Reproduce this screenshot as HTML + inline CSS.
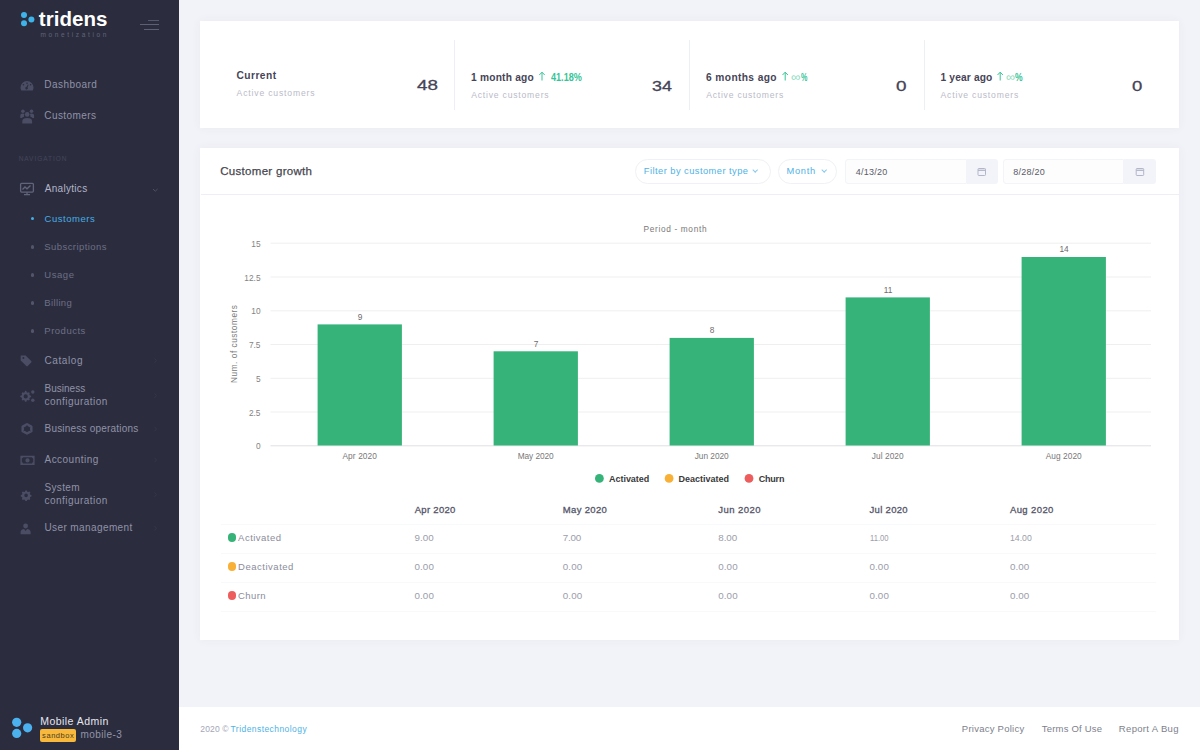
<!DOCTYPE html>
<html><head><meta charset="utf-8">
<style>
*{box-sizing:border-box;margin:0;padding:0}
html,body{width:1200px;height:750px;overflow:hidden}
body{font-family:"Liberation Sans",sans-serif;background:#f2f3f8;position:relative}
.t{position:absolute;white-space:nowrap;line-height:1}
.a{position:absolute}
#side{position:absolute;left:0;top:0;width:179px;height:750px;background:#2b2d3e}
.card{position:absolute;background:#fff;box-shadow:0 0 9px rgba(82,63,105,.05)}
.dot{position:absolute;left:30.8px;width:3.2px;height:3.2px;border-radius:50%;background:#53556b}
.vl{position:absolute;width:1px;background:#eeeff4;top:40px;height:70px}
.hl{position:absolute;height:1px;background:#f8f9fb;left:221px;width:935px}
.pill{position:absolute;border:1px solid #f0f1f6;border-radius:13px;top:159px;height:24.5px}
.chev{position:absolute;width:4.4px;height:4.4px;border-right:1px solid #86c9ef;border-bottom:1px solid #86c9ef;transform:rotate(45deg)}
.inp{position:absolute;background:#fdfdfe;border:1px solid #f3f4f8;top:159px;height:25px;border-radius:3px 0 0 3px}
.add{position:absolute;background:#f3f4f9;top:159px;height:25px;border-radius:0 3px 3px 0}
.rd{position:absolute;left:227.7px;width:8.6px;height:8.6px;border-radius:50%}
.ar{position:absolute;width:5px;height:5px}
</style></head><body>
<div id="side"></div>
<!-- logo -->
<svg class="a" style="left:18px;top:9px" width="20" height="20" viewBox="18 9 20 20">
  <circle cx="24" cy="15" r="3" fill="#3db3ea"/><circle cx="24" cy="23.3" r="3" fill="#3db3ea"/><circle cx="31.4" cy="19.4" r="3" fill="#3db3ea"/>
</svg>
<div class="a" style="left:148px;top:19.5px;width:10.5px;height:1px;background:#54566b"></div>
<div class="a" style="left:140px;top:24px;width:18.5px;height:1px;background:#5d5f74"></div>
<div class="a" style="left:144px;top:28.5px;width:14.5px;height:1px;background:#5d5f74"></div>
<!-- sub dots -->
<div class="dot" style="top:217.2px;background:#45aee6"></div><div class="dot" style="top:245.4px"></div><div class="dot" style="top:273.4px"></div><div class="dot" style="top:301.4px"></div><div class="dot" style="top:329.4px"></div>
<!-- menu icons -->
<svg class="a" style="left:0;top:0" width="179" height="750" viewBox="0 0 179 750" fill="#4b4d64">
  <!-- dashboard gauge -->
  <path d="M27 81a6.5 6.5 0 0 0-6.5 6.5c0 1.1.3 2.1.8 3h11.4c.5-.9.8-1.900.8-3A6.500 6.500 0 0 0 27 81zm0 1.400a.8.8 0 1 1 0 1.600.8.8 0 0 1 0-1.600zm-3.600 1.500a.8.8 0 1 1 0 1.600.8.8 0 0 1 0-1.600zm7.200 0a.8.8 0 1 1 0 1.600.8.8 0 0 1 0-1.600zm-2 .9-1 2.600a1.300 1.300 0 1 1-1.200-.5l1.500-2.300z"/>
  <!-- customers -->
  <g>
    <circle cx="22.900" cy="111.300" r="1.800"/><circle cx="31.500" cy="111.300" r="1.800"/><circle cx="27.200" cy="114.400" r="2.300"/>
    <path d="M20.300 118v-2.400c0-1.300 1-2.100 2.600-2.100.7 0 1.300.2 1.700.5-.5.700-.8 1.600-.500 2.700-1 .3-1.800.8-2.300 1.300zM34.100 118v-2.400c0-1.300-1-2.100-2.600-2.100-.7 0-1.300.2-1.700.5.5.7.8 1.600.5 2.700 1 .3 1.800.8 2.300 1.300z"/>
    <path d="M22.300 123.600v-2.600c0-1.900 1.900-3.100 4.900-3.100s4.900 1.200 4.900 3.100v2.600z"/>
  </g>
  <!-- analytics monitor -->
  <g fill="none" stroke="#62647b" stroke-width="1.300">
    <rect x="20.600" y="183.300" width="12.800" height="8.800" rx="1"/>
    <path d="M22.500 189.500l2.500-2.500 2 1.800 3.500-3.300"/>
    <path d="M24 194.700h6M27 192.200v2.400"/>
  </g>
  <!-- catalog tag -->
  <path d="M21 355.500h4.600l5.600 5.600a1 1 0 0 1 0 1.400l-3.500 3.500a1 1 0 0 1-1.400 0L20.700 360.400v-4.600zm2.400 1.600a1 1 0 1 0 0 2 1 1 0 0 0 0-2z"/>
  <!-- business configuration gears -->
  <g>
    <path d="M25.400 390.800l1 .2.300 1.200 1.100.6 1.100-.5.900.9-.5 1.100.6 1.100 1.200.3v1.400l-1.200.3-.6 1.100.5 1.100-.9.900-1.100-.5-1.100.6-.3 1.200h-1.400l-.3-1.200-1.100-.6-1.100.5-.9-.9.500-1.100-.6-1.100-1.200-.3v-1.400l1.200-.3.600-1.100-.5-1.100.9-.9 1.100.5 1.100-.6.300-1.200zM25.700 394.300a2.100 2.100 0 1 0 0 4.200 2.100 2.100 0 0 0 0-4.200z" fill-rule="evenodd"/>
    <circle cx="32.800" cy="392" r="1.700"/><circle cx="32.800" cy="400.300" r="1.700"/>
  </g>
  <!-- business operations recycle -->
  <path d="M27 424.300l4.300 2.300v4.600l-4.300 2.300-4.300-2.300v-4.600z" fill="none" stroke="#4b4d64" stroke-width="2.500" stroke-linejoin="round"/>
  <path d="M27 425v3.800M27 428.800l3.600 2.200M27 428.800l-3.600 2.200" stroke="#2b2d3e" stroke-width=".7" fill="none"/>
  <!-- accounting bill -->
  <path d="M20.400 455.800h14.200v9.200H20.400zm2.600 1.500a1.400 1.400 0 0 1-1.200 1.200v3.800a1.400 1.400 0 0 1 1.200 1.200h9a1.400 1.400 0 0 1 1.200-1.200v-3.800a1.400 1.400 0 0 1-1.200-1.200zm4.500 1a2.100 2.100 0 1 1 0 4.200 2.100 2.100 0 0 1 0-4.200z" fill-rule="evenodd"/>
  <!-- system config gear -->
  <path d="M25.300 490.500h1.600l.3 1.200 1 .4 1.100-.6 1.100 1.100-.6 1.100.4 1 1.200.3v1.600l-1.200.3-.4 1 .6 1.100-1.100 1.100-1.100-.6-1 .4-.3 1.200h-1.600l-.3-1.200-1-.4-1.100.6-1.100-1.100.6-1.100-.4-1-1.200-.3v-1.600l1.200-.3.400-1-.6-1.100 1.100-1.100 1.100.6 1-.4zM26.100 493.600a1.800 1.800 0 1 0 0 3.600 1.800 1.800 0 0 0 0-3.600z" fill-rule="evenodd"/>
  <!-- user management -->
  <g>
    <circle cx="25.600" cy="526" r="2.400"/>
    <path d="M20.600 534.300v-2.300c0-1.800 2-2.800 3.500-2.900l1.500 2 1.500-2c1.500.1 3.500 1.100 3.500 2.900v2.300z"/>
  </g>
  <!-- chevrons -->
  <path d="M153 189l2.300 2.200 2.300-2.200" fill="none" stroke="#4d4f65" stroke-width="1"/>
  <g fill="none" stroke="#34364a" stroke-width="1">
    <path d="M154.500 358.500l2 2.200-2 2.200M154.500 393.500l2 2.200-2 2.200M154.500 426.800l2 2.200-2 2.200M154.500 457.800l2 2.200-2 2.200M154.500 492.500l2 2.200-2 2.200M154.500 526l2 2.200-2 2.200"/>
  </g>
</svg>
<!-- user block -->
<svg class="a" style="left:10px;top:714px" width="26" height="28" viewBox="10 714 26 28">
  <circle cx="16.700" cy="722.300" r="4.600" fill="#4cb2ef"/><circle cx="16.700" cy="733.400" r="4.600" fill="#4cb2ef"/><circle cx="27.600" cy="727.800" r="4.600" fill="#4cb2ef"/>
</svg>
<div class="a" style="left:40px;top:729px;width:36px;height:12.600px;background:#f8b83c;border-radius:2px"></div>

<!-- stat card -->
<div class="card" style="left:200.300px;top:21.300px;width:979.200px;height:107px"></div>
<div class="vl" style="left:454px"></div><div class="vl" style="left:689px"></div><div class="vl" style="left:924px"></div>
<svg class="a" style="left:530px;top:68px" width="500" height="16" viewBox="530 68 500 16" fill="none" stroke="#35c495" stroke-width="1">
  <path d="M542 80.500v-8.200M539.300 75l2.700-2.800 2.700 2.800"/>
  <path d="M785.200 80.500v-8.200M782.500 75l2.700-2.800 2.700 2.800"/>
  <path d="M1000.200 80.500v-8.200M997.500 75l2.700-2.800 2.700 2.800"/>
</svg>

<!-- growth card -->
<div class="card" style="left:200.300px;top:148.300px;width:979.200px;height:491.300px"></div>
<div class="a" style="left:200.500px;top:194px;width:979px;height:1px;background:#eeeff4"></div>
<div class="pill" style="left:634.500px;width:136px"></div><div class="chev" style="left:753px;top:167.500px"></div>
<div class="pill" style="left:778px;width:59px"></div><div class="chev" style="left:821.500px;top:167.500px"></div>
<div class="inp" style="left:845px;width:122px"></div><div class="add" style="left:967px;width:31px"></div>
<div class="inp" style="left:1003px;width:121px"></div><div class="add" style="left:1124px;width:32px"></div>
<svg class="a" style="left:970px;top:162px" width="180" height="18" viewBox="970 162 180 18" fill="none" stroke="#b3b6c8" stroke-width="1">
  <rect x="978" y="168.500" width="7.500" height="7" rx=".8"/><path d="M978 170.300h7.500" stroke-width="1.300"/>
  <rect x="1136.200" y="168.500" width="7.500" height="7" rx=".8"/><path d="M1136.200 170.300h7.500" stroke-width="1.300"/>
</svg>

<!-- chart -->
<svg class="a" style="left:201px;top:200px" width="977" height="295" viewBox="201 200 977 295" font-family="Liberation Sans, sans-serif">
  <g stroke="#efefef" stroke-width="1" fill="none">
    <path d="M270.500 243.200H1151M270.500 277H1151M270.500 310.800H1151M270.500 344.500H1151M270.500 378.300H1151M270.500 412H1151"/>
    <path d="M270.500 445.800H1151" stroke="#e0e0e5"/>
  </g>
  <g fill="#36b378">
    <rect x="317.600" y="324.400" width="84.300" height="121.100"/>
    <rect x="493.600" y="351.300" width="84.300" height="94.200"/>
    <rect x="669.600" y="337.900" width="84.300" height="107.600"/>
    <rect x="845.600" y="297.400" width="84.300" height="148.100"/>
    <rect x="1021.600" y="257" width="84.300" height="188.500"/>
  </g>
  <g font-size="8.300" fill="#838383" text-anchor="end">
    <text x="260.500" y="246.800">15</text><text x="260.500" y="280.500">12.5</text><text x="260.500" y="314.300">10</text><text x="260.500" y="348">7.5</text><text x="260.500" y="381.800">5</text><text x="260.500" y="415.500">2.5</text><text x="260.500" y="449.200">0</text>
  </g>
  <g font-size="8.300" fill="#6c6c6c" text-anchor="middle">
    <text x="360" y="319.700">9</text><text x="536" y="346.700">7</text><text x="712" y="333.200">8</text><text x="888" y="292.800">11</text><text x="1064" y="252.300">14</text>
  </g>
  <g font-size="8.300" fill="#787878" text-anchor="middle">
    <text x="359.700" y="459" textLength="34.500">Apr 2020</text><text x="535.700" y="459" textLength="36">May 2020</text><text x="711.700" y="459" textLength="34">Jun 2020</text><text x="887.700" y="459" textLength="32">Jul 2020</text><text x="1063.700" y="459" textLength="36">Aug 2020</text>
    <text x="675" y="232" textLength="63">Period - month</text>
    <text transform="translate(237.300,344) rotate(-90)" textLength="78">Num. of customers</text>
  </g>
  <circle cx="599.400" cy="478.400" r="4.400" fill="#36b378"/><circle cx="669.100" cy="478.400" r="4.400" fill="#f8b037"/><circle cx="749" cy="478.400" r="4.400" fill="#ee5d5d"/>
  <g font-size="9" font-weight="bold" fill="#3a3a3a">
    <text x="609" y="481.600" textLength="40.300">Activated</text><text x="678.600" y="481.600" textLength="50.300">Deactivated</text><text x="758.800" y="481.600" textLength="25.600">Churn</text>
  </g>
</svg>

<!-- table -->
<div class="hl" style="top:524px"></div><div class="hl" style="top:553px"></div><div class="hl" style="top:582px"></div><div class="hl" style="top:611px"></div>
<div class="rd" style="top:533.300px;background:#36b378"></div><div class="rd" style="top:562.300px;background:#f8b037"></div><div class="rd" style="top:591.300px;background:#ee5d5d"></div>

<!-- footer -->
<div class="a" style="left:179px;top:707px;width:1021px;height:43px;background:#fff"></div>

<div class="t" style="left:38.77px;top:9.33px;font-size:20.5px;color:#ffffff;font-weight:bold;letter-spacing:0.056px;">tridens</div>
<div class="t" style="left:40.47px;top:31.54px;font-size:6.5px;color:#62647b;letter-spacing:2.649px;">monetization</div>
<div class="t" style="left:44.30px;top:80.14px;font-size:10px;color:#9092a8;letter-spacing:0.442px;">Dashboard</div>
<div class="t" style="left:44.30px;top:111.14px;font-size:10px;color:#9092a8;letter-spacing:0.405px;">Customers</div>
<div class="t" style="left:18.68px;top:156.34px;font-size:6.5px;color:#43455b;letter-spacing:0.952px;">NAVIGATION</div>
<div class="t" style="left:44.70px;top:184.13px;font-size:10px;color:#b3b5c9;letter-spacing:0.309px;">Analytics</div>
<div class="t" style="left:44.52px;top:214.38px;font-size:9.5px;color:#45aee6;letter-spacing:0.524px;">Customers</div>
<div class="t" style="left:44.32px;top:242.38px;font-size:9.5px;color:#6d6f86;letter-spacing:0.425px;">Subscriptions</div>
<div class="t" style="left:44.32px;top:270.38px;font-size:9.5px;color:#6d6f86;letter-spacing:0.536px;">Usage</div>
<div class="t" style="left:44.32px;top:298.38px;font-size:9.5px;color:#6d6f86;letter-spacing:0.356px;">Billing</div>
<div class="t" style="left:44.32px;top:326.38px;font-size:9.5px;color:#6d6f86;letter-spacing:0.506px;">Products</div>
<div class="t" style="left:44.50px;top:355.83px;font-size:10px;color:#9092a8;letter-spacing:0.604px;">Catalog</div>
<div class="t" style="left:44.50px;top:384.13px;font-size:10px;color:#9092a8;letter-spacing:0.015px;">Business</div>
<div class="t" style="left:44.50px;top:397.13px;font-size:10px;color:#9092a8;letter-spacing:0.464px;">configuration</div>
<div class="t" style="left:44.50px;top:424.13px;font-size:10px;color:#9092a8;letter-spacing:0.207px;">Business operations</div>
<div class="t" style="left:44.50px;top:455.13px;font-size:10px;color:#9092a8;letter-spacing:0.472px;">Accounting</div>
<div class="t" style="left:44.50px;top:483.44px;font-size:10px;color:#9092a8;letter-spacing:0.326px;">System</div>
<div class="t" style="left:44.50px;top:496.44px;font-size:10px;color:#9092a8;letter-spacing:0.464px;">configuration</div>
<div class="t" style="left:44.50px;top:523.43px;font-size:10px;color:#9092a8;letter-spacing:0.396px;">User management</div>
<div class="t" style="left:40.18px;top:715.59px;font-size:10.5px;color:#e6e7f0;letter-spacing:0.468px;">Mobile Admin</div>
<div class="t" style="left:42.12px;top:731.55px;font-size:7.5px;color:#4a4020;letter-spacing:0.556px;">sandbox</div>
<div class="t" style="left:80.50px;top:730.13px;font-size:10px;color:#9294a8;letter-spacing:0.418px;">mobile-3</div>
<div class="t" style="left:236.49px;top:70.54px;font-size:10.2px;color:#464457;font-weight:bold;letter-spacing:0.460px;">Current</div>
<div class="t" style="left:236.57px;top:88.82px;font-size:8.6px;color:#b9bac8;letter-spacing:0.839px;">Active customers</div>
<div class="t" style="left:416.85px;top:77.30px;font-size:15px;color:#464457;letter-spacing:0.000px;-webkit-text-stroke:.3px #464457;transform:scaleX(1.2524);transform-origin:0 0;">48</div>
<div class="t" style="left:471.09px;top:72.64px;font-size:10.2px;color:#464457;font-weight:bold;letter-spacing:0.205px;">1 month ago</div>
<div class="t" style="left:551.09px;top:72.64px;font-size:10.2px;color:#35c495;font-weight:bold;letter-spacing:0.000px;transform:scaleX(0.8917);transform-origin:0 0;">41.18%</div>
<div class="t" style="left:471.17px;top:90.82px;font-size:8.6px;color:#b9bac8;letter-spacing:0.801px;">Active customers</div>
<div class="t" style="left:652.25px;top:78.30px;font-size:15px;color:#464457;letter-spacing:0.000px;-webkit-text-stroke:.3px #464457;transform:scaleX(1.1925);transform-origin:0 0;">34</div>
<div class="t" style="left:706.09px;top:72.54px;font-size:10.2px;color:#464457;font-weight:bold;letter-spacing:0.382px;">6 months ago</div>
<div class="t" style="left:706.17px;top:90.82px;font-size:8.6px;color:#b9bac8;letter-spacing:0.776px;">Active customers</div>
<div class="t" style="left:896.25px;top:78.40px;font-size:15px;color:#464457;letter-spacing:0.000px;-webkit-text-stroke:.3px #464457;transform:scaleX(1.2584);transform-origin:0 0;">0</div>
<div class="t" style="left:940.49px;top:72.54px;font-size:10.2px;color:#464457;font-weight:bold;letter-spacing:0.161px;">1 year ago</div>
<div class="t" style="left:940.57px;top:90.82px;font-size:8.6px;color:#b9bac8;letter-spacing:0.814px;">Active customers</div>
<div class="t" style="left:1131.85px;top:78.40px;font-size:15px;color:#464457;letter-spacing:0.000px;-webkit-text-stroke:.3px #464457;transform:scaleX(1.2345);transform-origin:0 0;">0</div>
<div class="t" style="left:791.02px;top:71.71px;font-size:11.5px;color:#8ddcc0;letter-spacing:0.000px;transform:scaleX(1.1642);transform-origin:0 0;">∞</div>
<div class="t" style="left:800.50px;top:72.64px;font-size:10px;color:#35c495;font-weight:bold;letter-spacing:0.000px;transform:scaleX(0.7186);transform-origin:0 0;">%</div>
<div class="t" style="left:1006.02px;top:71.71px;font-size:11.5px;color:#8ddcc0;letter-spacing:0.000px;transform:scaleX(1.1154);transform-origin:0 0;">∞</div>
<div class="t" style="left:1014.90px;top:72.64px;font-size:10px;color:#35c495;font-weight:bold;letter-spacing:0.000px;transform:scaleX(0.8533);transform-origin:0 0;">%</div>
<div class="t" style="left:220.18px;top:166.41px;font-size:11.5px;color:#47464f;letter-spacing:0.306px;-webkit-text-stroke:.25px #47464f;">Customer growth</div>
<div class="t" style="left:643.78px;top:166.98px;font-size:9.3px;color:#4fb2e6;letter-spacing:0.463px;">Filter by customer type</div>
<div class="t" style="left:786.53px;top:166.98px;font-size:9.3px;color:#4fb2e6;letter-spacing:0.717px;">Month</div>
<div class="t" style="left:855.80px;top:167.92px;font-size:9px;color:#5a5b66;letter-spacing:0.231px;">4/13/20</div>
<div class="t" style="left:1013.30px;top:167.92px;font-size:9px;color:#5a5b66;letter-spacing:0.231px;">8/28/20</div>
<div class="t" style="left:414.72px;top:504.98px;font-size:9.5px;color:#55566a;letter-spacing:0.298px;-webkit-text-stroke:.3px #55566a;">Apr 2020</div>
<div class="t" style="left:562.82px;top:504.98px;font-size:9.5px;color:#55566a;letter-spacing:0.327px;-webkit-text-stroke:.3px #55566a;">May 2020</div>
<div class="t" style="left:718.27px;top:504.98px;font-size:9.5px;color:#55566a;letter-spacing:0.438px;-webkit-text-stroke:.3px #55566a;">Jun 2020</div>
<div class="t" style="left:869.52px;top:504.98px;font-size:9.5px;color:#55566a;letter-spacing:0.316px;-webkit-text-stroke:.3px #55566a;">Jul 2020</div>
<div class="t" style="left:1009.92px;top:504.98px;font-size:9.5px;color:#55566a;letter-spacing:0.395px;-webkit-text-stroke:.3px #55566a;">Aug 2020</div>
<div class="t" style="left:238.12px;top:532.98px;font-size:9.5px;color:#8b8c9b;letter-spacing:0.475px;">Activated</div>
<div class="t" style="left:238.12px;top:561.98px;font-size:9.5px;color:#8b8c9b;letter-spacing:0.507px;">Deactivated</div>
<div class="t" style="left:238.12px;top:590.98px;font-size:9.5px;color:#8b8c9b;letter-spacing:0.375px;">Churn</div>
<div class="t" style="left:414.51px;top:533.43px;font-size:9.8px;color:#9c9dab;letter-spacing:0.050px;">9.00</div>
<div class="t" style="left:562.81px;top:533.43px;font-size:9.8px;color:#9c9dab;letter-spacing:-0.200px;">7.00</div>
<div class="t" style="left:718.26px;top:533.43px;font-size:9.8px;color:#9c9dab;letter-spacing:-0.025px;">8.00</div>
<div class="t" style="left:869.51px;top:533.43px;font-size:9.8px;color:#9c9dab;letter-spacing:0.000px;transform:scaleX(0.7766);transform-origin:0 0;">11.00</div>
<div class="t" style="left:1009.91px;top:533.43px;font-size:9.8px;color:#9c9dab;letter-spacing:0.000px;transform:scaleX(0.8878);transform-origin:0 0;">14.00</div>
<div class="t" style="left:414.51px;top:562.43px;font-size:9.8px;color:#9c9dab;letter-spacing:0.100px;">0.00</div>
<div class="t" style="left:562.81px;top:562.43px;font-size:9.8px;color:#9c9dab;letter-spacing:0.100px;">0.00</div>
<div class="t" style="left:718.26px;top:562.43px;font-size:9.8px;color:#9c9dab;letter-spacing:0.100px;">0.00</div>
<div class="t" style="left:869.51px;top:562.43px;font-size:9.8px;color:#9c9dab;letter-spacing:0.100px;">0.00</div>
<div class="t" style="left:1009.91px;top:562.43px;font-size:9.8px;color:#9c9dab;letter-spacing:0.100px;">0.00</div>
<div class="t" style="left:414.51px;top:591.43px;font-size:9.8px;color:#9c9dab;letter-spacing:0.100px;">0.00</div>
<div class="t" style="left:562.81px;top:591.43px;font-size:9.8px;color:#9c9dab;letter-spacing:0.100px;">0.00</div>
<div class="t" style="left:718.26px;top:591.43px;font-size:9.8px;color:#9c9dab;letter-spacing:0.100px;">0.00</div>
<div class="t" style="left:869.51px;top:591.43px;font-size:9.8px;color:#9c9dab;letter-spacing:0.100px;">0.00</div>
<div class="t" style="left:1009.91px;top:591.43px;font-size:9.8px;color:#9c9dab;letter-spacing:0.100px;">0.00</div>
<div class="t" style="left:200.27px;top:724.56px;font-size:8.5px;color:#a4a6b8;letter-spacing:0.151px;">2020 ©</div>
<div class="t" style="left:230.57px;top:724.56px;font-size:8.5px;color:#4fb2e6;letter-spacing:0.435px;">Tridenstechnology</div>
<div class="t" style="left:961.82px;top:723.68px;font-size:9.5px;color:#7d7f8c;letter-spacing:0.252px;">Privacy Policy</div>
<div class="t" style="left:1041.83px;top:723.68px;font-size:9.5px;color:#7d7f8c;letter-spacing:0.191px;">Terms Of Use</div>
<div class="t" style="left:1118.83px;top:723.68px;font-size:9.5px;color:#7d7f8c;letter-spacing:0.330px;">Report A Bug</div>

</body></html>
